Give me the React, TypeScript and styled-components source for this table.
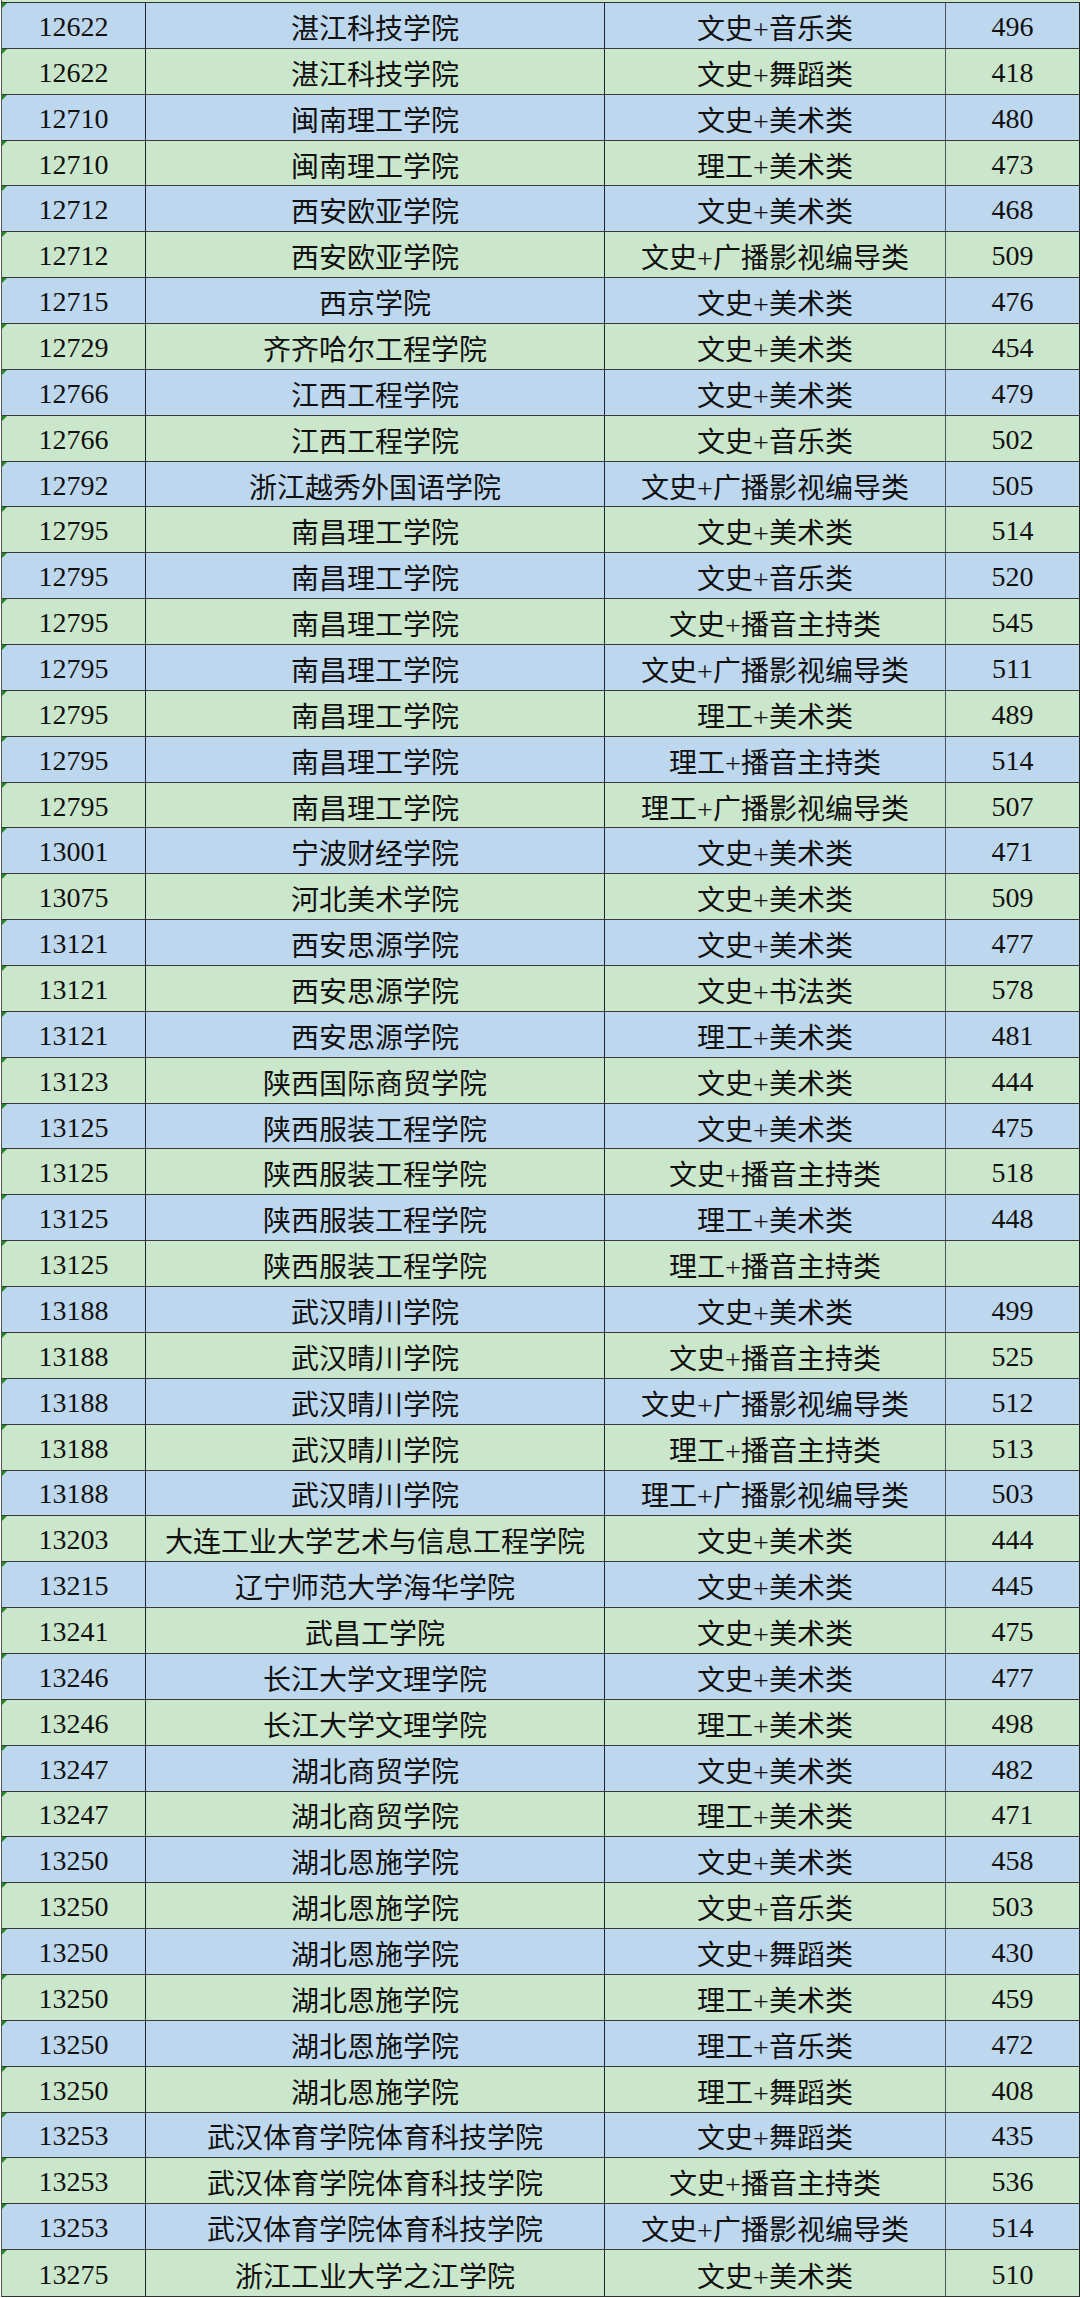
import React from 'react';
import styled, { createGlobalStyle } from 'styled-components';

const GlobalStyle = createGlobalStyle`
    html, body {
        margin: 0;
        padding: 0;
        background: #ffffff;
    }
    * {
        box-sizing: border-box;
    }
`;

const BLUE = '#bdd7ee';
const GREEN = '#cbe7cb';

type Row = [string, string, string, string];

const rows: Row[] = [
    ['12622', '湛江科技学院', '文史+音乐类', '496'],
    ['12622', '湛江科技学院', '文史+舞蹈类', '418'],
    ['12710', '闽南理工学院', '文史+美术类', '480'],
    ['12710', '闽南理工学院', '理工+美术类', '473'],
    ['12712', '西安欧亚学院', '文史+美术类', '468'],
    ['12712', '西安欧亚学院', '文史+广播影视编导类', '509'],
    ['12715', '西京学院', '文史+美术类', '476'],
    ['12729', '齐齐哈尔工程学院', '文史+美术类', '454'],
    ['12766', '江西工程学院', '文史+美术类', '479'],
    ['12766', '江西工程学院', '文史+音乐类', '502'],
    ['12792', '浙江越秀外国语学院', '文史+广播影视编导类', '505'],
    ['12795', '南昌理工学院', '文史+美术类', '514'],
    ['12795', '南昌理工学院', '文史+音乐类', '520'],
    ['12795', '南昌理工学院', '文史+播音主持类', '545'],
    ['12795', '南昌理工学院', '文史+广播影视编导类', '511'],
    ['12795', '南昌理工学院', '理工+美术类', '489'],
    ['12795', '南昌理工学院', '理工+播音主持类', '514'],
    ['12795', '南昌理工学院', '理工+广播影视编导类', '507'],
    ['13001', '宁波财经学院', '文史+美术类', '471'],
    ['13075', '河北美术学院', '文史+美术类', '509'],
    ['13121', '西安思源学院', '文史+美术类', '477'],
    ['13121', '西安思源学院', '文史+书法类', '578'],
    ['13121', '西安思源学院', '理工+美术类', '481'],
    ['13123', '陕西国际商贸学院', '文史+美术类', '444'],
    ['13125', '陕西服装工程学院', '文史+美术类', '475'],
    ['13125', '陕西服装工程学院', '文史+播音主持类', '518'],
    ['13125', '陕西服装工程学院', '理工+美术类', '448'],
    ['13125', '陕西服装工程学院', '理工+播音主持类', ''],
    ['13188', '武汉晴川学院', '文史+美术类', '499'],
    ['13188', '武汉晴川学院', '文史+播音主持类', '525'],
    ['13188', '武汉晴川学院', '文史+广播影视编导类', '512'],
    ['13188', '武汉晴川学院', '理工+播音主持类', '513'],
    ['13188', '武汉晴川学院', '理工+广播影视编导类', '503'],
    ['13203', '大连工业大学艺术与信息工程学院', '文史+美术类', '444'],
    ['13215', '辽宁师范大学海华学院', '文史+美术类', '445'],
    ['13241', '武昌工学院', '文史+美术类', '475'],
    ['13246', '长江大学文理学院', '文史+美术类', '477'],
    ['13246', '长江大学文理学院', '理工+美术类', '498'],
    ['13247', '湖北商贸学院', '文史+美术类', '482'],
    ['13247', '湖北商贸学院', '理工+美术类', '471'],
    ['13250', '湖北恩施学院', '文史+美术类', '458'],
    ['13250', '湖北恩施学院', '文史+音乐类', '503'],
    ['13250', '湖北恩施学院', '文史+舞蹈类', '430'],
    ['13250', '湖北恩施学院', '理工+美术类', '459'],
    ['13250', '湖北恩施学院', '理工+音乐类', '472'],
    ['13250', '湖北恩施学院', '理工+舞蹈类', '408'],
    ['13253', '武汉体育学院体育科技学院', '文史+舞蹈类', '435'],
    ['13253', '武汉体育学院体育科技学院', '文史+播音主持类', '536'],
    ['13253', '武汉体育学院体育科技学院', '文史+广播影视编导类', '514'],
    ['13275', '浙江工业大学之江学院', '文史+美术类', '510'],
];

const Sheet = styled.div`
    width: 1080px;
    background: #ffffff;
`;

// sliver of the row above that is cut off by the screenshot
const TopStrip = styled.div`
    height: 2px;
    margin-left: 1px;
    background: ${GREEN};
    border-left: 1px solid #555;
`;

const Table = styled.div`
    margin-left: 1px;
    border-left: 1px solid #555;
    border-top: 1px solid #333;
    border-bottom: 1px solid #333;
    width: 1079px;
`;

const RowLine = styled.div<{ $even: boolean }>`
    display: grid;
    grid-template-columns: 144px 459px 341px 134px;
    height: 45.86px;
    background: ${p => (p.$even ? GREEN : BLUE)};
    border-bottom: 1px solid #3a3a3a;

    &:last-child {
        border-bottom: none;
    }
`;

const Cell = styled.div<{ $strong?: boolean }>`
    display: flex;
    align-items: center;
    justify-content: center;
    padding-top: 3px;
    border-right: 1px solid ${p => (p.$strong ? '#1c2633' : '#4a5563')};
    font-family: "Liberation Serif", "Noto Sans CJK SC", serif;
    font-size: 28px;
    color: #111;
    white-space: nowrap;
    overflow: hidden;
`;

const CodeCell = styled(Cell)`
    position: relative;

    &::before {
        content: '';
        position: absolute;
        left: 0;
        top: 0;
        width: 0;
        height: 0;
        border-top: 5px solid #1f8a1f;
        border-right: 5px solid transparent;
    }
`;

const LastCell = styled(Cell)`
    border-right: 1px solid #222;
`;

function App() {
    return (
        <Sheet>
            <GlobalStyle />
            <TopStrip />
            <Table>
                {rows.map((r, i) => (
                    <RowLine key={i} $even={i % 2 === 1}>
                        <CodeCell $strong>{r[0]}</CodeCell>
                        <Cell $strong>{r[1]}</Cell>
                        <Cell>{r[2]}</Cell>
                        <LastCell>{r[3]}</LastCell>
                    </RowLine>
                ))}
            </Table>
        </Sheet>
    );
}

export default App;
